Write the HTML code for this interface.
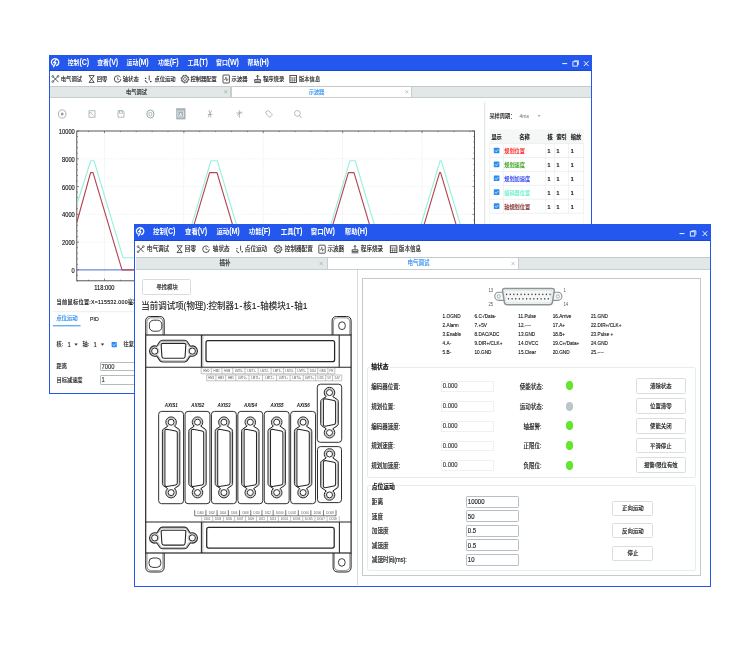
<!DOCTYPE html><html lang="zh"><head><meta charset="utf-8"><title>运动控制器调试软件</title><style>html,body{margin:0;padding:0}body{width:750px;height:650px;background:#fff;position:relative;overflow:hidden;font-family:'Liberation Sans','Noto Sans CJK SC',sans-serif}svg text{font-family:'Liberation Sans','Noto Sans CJK SC',sans-serif}div{-webkit-text-stroke:0.13px currentColor}</style></head><body><div id="root" style="position:absolute;left:0;top:0;width:750px;height:650px;will-change:transform">
<div style="position:absolute;left:49.10px;top:55.00px;width:542.80px;height:338.60px;background:#fff;border:1.3px solid #2357ee;box-sizing:border-box"></div>
<div style="position:absolute;left:49.10px;top:55.00px;width:542.80px;height:16.20px;background:#2357ee;border-bottom:0.8px solid #1449d6;box-sizing:border-box"></div>
<div style="position:absolute;left:67.70px;top:59.46px;line-height:7.67px;font-size:5.9px;color:#fff;font-weight:bold;white-space:nowrap;transform:scaleY(1.15);-webkit-text-stroke:0;">控制<span style="font-size:7.2px;letter-spacing:-0.2px">(C)</span></div>
<div style="position:absolute;left:97.20px;top:59.46px;line-height:7.67px;font-size:5.9px;color:#fff;font-weight:bold;white-space:nowrap;transform:scaleY(1.15);-webkit-text-stroke:0;">查看<span style="font-size:7.2px;letter-spacing:-0.2px">(V)</span></div>
<div style="position:absolute;left:126.60px;top:59.46px;line-height:7.67px;font-size:5.9px;color:#fff;font-weight:bold;white-space:nowrap;transform:scaleY(1.15);-webkit-text-stroke:0;">运动<span style="font-size:7.2px;letter-spacing:-0.2px">(M)</span></div>
<div style="position:absolute;left:158.00px;top:59.46px;line-height:7.67px;font-size:5.9px;color:#fff;font-weight:bold;white-space:nowrap;transform:scaleY(1.15);-webkit-text-stroke:0;">功能<span style="font-size:7.2px;letter-spacing:-0.2px">(F)</span></div>
<div style="position:absolute;left:187.40px;top:59.46px;line-height:7.67px;font-size:5.9px;color:#fff;font-weight:bold;white-space:nowrap;transform:scaleY(1.15);-webkit-text-stroke:0;">工具<span style="font-size:7.2px;letter-spacing:-0.2px">(T)</span></div>
<div style="position:absolute;left:216.00px;top:59.46px;line-height:7.67px;font-size:5.9px;color:#fff;font-weight:bold;white-space:nowrap;transform:scaleY(1.15);-webkit-text-stroke:0;">窗口<span style="font-size:7.2px;letter-spacing:-0.2px">(W)</span></div>
<div style="position:absolute;left:247.60px;top:59.46px;line-height:7.67px;font-size:5.9px;color:#fff;font-weight:bold;white-space:nowrap;transform:scaleY(1.15);-webkit-text-stroke:0;">帮助<span style="font-size:7.2px;letter-spacing:-0.2px">(H)</span></div>
<div style="position:absolute;left:50.40px;top:85.80px;width:540.20px;height:11.80px;background:#e2e8e8;border-top:1px solid #c2caca;border-bottom:1px solid #c6cece;box-sizing:border-box"></div>
<div style="position:absolute;left:230.50px;top:85.80px;width:181.00px;height:11.50px;background:#fff;border-top:1px solid #c2caca;border-left:0.7px solid #c6cece;border-right:0.7px solid #c6cece;box-sizing:border-box"></div>
<div style="position:absolute;left:230.00px;top:86.30px;width:0.70px;height:11.00px;background:#c6cece"></div>
<div style="position:absolute;left:36.50px;top:89.32px;width:200.00px;text-align:center;line-height:6.76px;font-size:5.2px;color:#222;font-weight:normal;white-space:nowrap;transform:scaleY(1.15);">电气调试</div>
<div style="position:absolute;left:216.50px;top:89.32px;width:200.00px;text-align:center;line-height:6.76px;font-size:5.2px;color:#3696f2;font-weight:normal;white-space:nowrap;transform:scaleY(1.15);">示波器</div>
<div style="position:absolute;left:60.80px;top:75.56px;line-height:6.89px;font-size:5.3px;color:#222;font-weight:normal;white-space:nowrap;transform:scaleY(1.15);">电气调试</div>
<div style="position:absolute;left:96.80px;top:75.56px;line-height:6.89px;font-size:5.3px;color:#222;font-weight:normal;white-space:nowrap;transform:scaleY(1.15);">回零</div>
<div style="position:absolute;left:122.80px;top:75.56px;line-height:6.89px;font-size:5.3px;color:#222;font-weight:normal;white-space:nowrap;transform:scaleY(1.15);">轴状态</div>
<div style="position:absolute;left:154.40px;top:75.56px;line-height:6.89px;font-size:5.3px;color:#222;font-weight:normal;white-space:nowrap;transform:scaleY(1.15);">点位运动</div>
<div style="position:absolute;left:190.40px;top:75.56px;line-height:6.89px;font-size:5.3px;color:#222;font-weight:normal;white-space:nowrap;transform:scaleY(1.15);">控制器配置</div>
<div style="position:absolute;left:231.60px;top:75.56px;line-height:6.89px;font-size:5.3px;color:#222;font-weight:normal;white-space:nowrap;transform:scaleY(1.15);">示波器</div>
<div style="position:absolute;left:263.00px;top:75.56px;line-height:6.89px;font-size:5.3px;color:#222;font-weight:normal;white-space:nowrap;transform:scaleY(1.15);">程序烧录</div>
<div style="position:absolute;left:299.00px;top:75.56px;line-height:6.89px;font-size:5.3px;color:#222;font-weight:normal;white-space:nowrap;transform:scaleY(1.15);">版本信息</div>
<svg style="position:absolute;left:0px;top:0px;overflow:visible" width="750" height="650" viewBox="0 0 750 650">
<ellipse cx="55.1" cy="62.2" rx="3.5" ry="3.7" fill="none" stroke="#fff" stroke-width="1.35" stroke-dasharray="19.5 3.2" transform="rotate(118 55.1 62.2)"/><path d="M56.5 59.400000000000006L53.6 62.7H55.9L53.300000000000004 67.2" stroke="#fff" stroke-width="1.25" fill="none" stroke-linejoin="round"/>
<path d="M562.2 63.6H567.2" stroke="#fff" stroke-width="0.95"/><rect x="572.9" y="61.7" width="4.5" height="4.4" fill="none" stroke="#fff" stroke-width="0.85"/><path d="M574.1 60.7H578.5V64.9" stroke="#fff" stroke-width="0.7" fill="none"/><path d="M583.9000000000001 61.2L588.5 66.0M588.5 61.2L583.9000000000001 66.0" stroke="#fff" stroke-width="0.95"/>
<path d="M53.199999999999996 76.8L58.4 82.0M57.8 76.6L53.199999999999996 81.2" stroke="#2a2a2a" stroke-width="0.8" fill="none"/><circle cx="52.8" cy="76.4" r="0.9" fill="none" stroke="#2a2a2a" stroke-width="0.6"/><circle cx="52.8" cy="81.6" r="0.9" fill="none" stroke="#2a2a2a" stroke-width="0.6"/><circle cx="58.1" cy="76.3" r="0.9" fill="none" stroke="#2a2a2a" stroke-width="0.6"/><path d="M89.0 75.6H94.19999999999999L91.6 79.0L94.19999999999999 82.4H89.0L91.6 79.0Z" stroke="#2a2a2a" stroke-width="0.8" fill="none"/><circle cx="117.6" cy="79.0" r="3.3" fill="none" stroke="#2a2a2a" stroke-width="0.8" stroke-dasharray="18.5 2.2"/><path d="M117.6 77.2V79.3H119.19999999999999" stroke="#2a2a2a" stroke-width="0.6" fill="none"/><path d="M145.2 80.0q0 2.5 2.5 2.5M149.2 75.5v5" stroke="#2a2a2a" stroke-width="0.8" fill="none"/><circle cx="150.79999999999998" cy="81.6" r="0.8" fill="#2a2a2a"/><circle cx="145.6" cy="78.4" r="0.7" fill="#2a2a2a"/><circle cx="185.0" cy="79.0" r="3.3" fill="none" stroke="#2a2a2a" stroke-width="0.8"/><circle cx="185.0" cy="79.0" r="3.9" fill="none" stroke="#2a2a2a" stroke-width="0.9" stroke-dasharray="1.4 1.66"/><circle cx="185.0" cy="79.0" r="1.5" fill="none" stroke="#2a2a2a" stroke-width="0.6"/><rect x="223.0" y="75.0" width="6.4" height="8.0" rx="0.6" fill="none" stroke="#2a2a2a" stroke-width="0.8"/><path d="M224.0 79.6H225.2L226.0 77.0L226.79999999999998 81.0L227.39999999999998 79.2H228.39999999999998" stroke="#2a2a2a" stroke-width="0.55" fill="none"/><path d="M254.20000000000002 82.6H261.0M254.60000000000002 81.2V79.6H260.6V81.2ZM257.6 75.4V79.4M256.40000000000003 76.6L257.6 75.2L258.8 76.6" stroke="#2a2a2a" stroke-width="0.8" fill="none"/><rect x="289.9" y="75.6" width="6.6" height="6.8" fill="none" stroke="#2a2a2a" stroke-width="0.8"/><path d="M289.9 77.8H296.5M289.9 80.1H296.5M292.2 77.8V82.4M294.4 77.8V82.4" stroke="#2a2a2a" stroke-width="0.5" fill="none"/>
<path d="M224.20000000000002 90.2L227.4 93.39999999999999M227.4 90.2L224.20000000000002 93.39999999999999" stroke="#8a9296" stroke-width="0.5"/>
<path d="M405.2 90.2L408.40000000000003 93.39999999999999M408.40000000000003 90.2L405.2 93.39999999999999" stroke="#8a9296" stroke-width="0.5"/>
<ellipse cx="62.2" cy="114.0" rx="3.7" ry="4.1" fill="none" stroke="#939fa5" stroke-width="0.8"/><ellipse cx="62.2" cy="114.0" rx="1.4" ry="1.6" fill="#939fa5"/>
<rect x="89.0" y="110.8" width="6" height="6.4" fill="none" stroke="#939fa5" stroke-width="0.7"/><path d="M90.5 112.5L93.5 115.5M89.0 112.8H91.5" stroke="#939fa5" stroke-width="0.6"/>
<path d="M118.0 110.8H123.0L124.0 111.8V117.2H118.0Z" fill="none" stroke="#939fa5" stroke-width="0.7"/><rect x="119.4" y="110.8" width="3.2" height="2.4" fill="none" stroke="#939fa5" stroke-width="0.6"/>
<ellipse cx="150.4" cy="114.0" rx="3.6" ry="4.0" fill="none" stroke="#939fa5" stroke-width="0.9"/><ellipse cx="150.4" cy="114.0" rx="1.6" ry="1.8" fill="none" stroke="#939fa5" stroke-width="0.7"/>
<rect x="176.2" y="108.2" width="9.3" height="11.2" fill="#a7b2b7"/><rect x="177.9" y="111.0" width="5.4" height="6.0" fill="none" stroke="#fff" stroke-width="0.6"/><text x="180.6" y="115.5" font-size="4.2" text-anchor="middle" fill="#fff">A</text>
<path d="M209.0 110.0L211.0 117.5M211.6 110.6L208.0 117.5M207.8 114.5H212.4" stroke="#939fa5" stroke-width="0.7" fill="none"/>
<path d="M239.4 110.2V117.8M236.20000000000002 113.0H242.6M237.20000000000002 115.8L241.4 111.4" stroke="#939fa5" stroke-width="0.7" fill="none"/>
<path d="M265.8 111.8L268.6 110.6L272.4 114.8L270.0 117.4L266.0 113.8Z" fill="none" stroke="#939fa5" stroke-width="0.7"/>
<circle cx="297.4" cy="113.4" r="2.9" fill="none" stroke="#939fa5" stroke-width="0.7"/><path d="M299.5 115.6L301.4 117.8" stroke="#939fa5" stroke-width="0.8"/>
<path d="M104.5 131.0V280.8" stroke="#d9dddd" stroke-width="0.5" stroke-dasharray="1 0.8"/>
<path d="M183.7 131.0V280.8" stroke="#d9dddd" stroke-width="0.5" stroke-dasharray="1 0.8"/>
<path d="M263.2 131.0V280.8" stroke="#d9dddd" stroke-width="0.5" stroke-dasharray="1 0.8"/>
<path d="M342.6 131.0V280.8" stroke="#d9dddd" stroke-width="0.5" stroke-dasharray="1 0.8"/>
<path d="M422.2 131.0V280.8" stroke="#d9dddd" stroke-width="0.5" stroke-dasharray="1 0.8"/>
<path d="M76.8 269.90H474.5" stroke="#e3e6e6" stroke-width="0.5" stroke-dasharray="1 0.8"/>
<path d="M76.8 242.12H474.5" stroke="#e3e6e6" stroke-width="0.5" stroke-dasharray="1 0.8"/>
<path d="M76.8 214.34H474.5" stroke="#e3e6e6" stroke-width="0.5" stroke-dasharray="1 0.8"/>
<path d="M76.8 186.56H474.5" stroke="#e3e6e6" stroke-width="0.5" stroke-dasharray="1 0.8"/>
<path d="M76.8 158.78H474.5" stroke="#e3e6e6" stroke-width="0.5" stroke-dasharray="1 0.8"/>
<rect x="76.8" y="131.0" width="397.7" height="149.8" fill="none" stroke="#444" stroke-width="0.9"/>
<path d="M76.8 281.01h1.1M474.5 281.01h-1.1M76.8 275.46h1.1M474.5 275.46h-1.1M76.8 269.90h2.2M474.5 269.90h-2.2M76.8 264.34h1.1M474.5 264.34h-1.1M76.8 258.79h1.1M474.5 258.79h-1.1M76.8 253.23h1.1M474.5 253.23h-1.1M76.8 247.68h1.1M474.5 247.68h-1.1M76.8 242.12h2.2M474.5 242.12h-2.2M76.8 236.56h1.1M474.5 236.56h-1.1M76.8 231.01h1.1M474.5 231.01h-1.1M76.8 225.45h1.1M474.5 225.45h-1.1M76.8 219.90h1.1M474.5 219.90h-1.1M76.8 214.34h2.2M474.5 214.34h-2.2M76.8 208.78h1.1M474.5 208.78h-1.1M76.8 203.23h1.1M474.5 203.23h-1.1M76.8 197.67h1.1M474.5 197.67h-1.1M76.8 192.12h1.1M474.5 192.12h-1.1M76.8 186.56h2.2M474.5 186.56h-2.2M76.8 181.00h1.1M474.5 181.00h-1.1M76.8 175.45h1.1M474.5 175.45h-1.1M76.8 169.89h1.1M474.5 169.89h-1.1M76.8 164.34h1.1M474.5 164.34h-1.1M76.8 158.78h2.2M474.5 158.78h-2.2M76.8 153.22h1.1M474.5 153.22h-1.1M76.8 147.67h1.1M474.5 147.67h-1.1M76.8 142.11h1.1M474.5 142.11h-1.1M76.8 136.56h1.1M474.5 136.56h-1.1M76.8 131.00h2.2M474.5 131.00h-2.2M88.62 131.0v1.1M88.62 280.8v-1.1M104.50 131.0v2.2M104.50 280.8v-2.2M120.38 131.0v1.1M120.38 280.8v-1.1M136.26 131.0v1.1M136.26 280.8v-1.1M152.14 131.0v1.1M152.14 280.8v-1.1M168.02 131.0v1.1M168.02 280.8v-1.1M183.90 131.0v2.2M183.90 280.8v-2.2M199.78 131.0v1.1M199.78 280.8v-1.1M215.66 131.0v1.1M215.66 280.8v-1.1M231.54 131.0v1.1M231.54 280.8v-1.1M247.42 131.0v1.1M247.42 280.8v-1.1M263.30 131.0v2.2M263.30 280.8v-2.2M279.18 131.0v1.1M279.18 280.8v-1.1M295.06 131.0v1.1M295.06 280.8v-1.1M310.94 131.0v1.1M310.94 280.8v-1.1M326.82 131.0v1.1M326.82 280.8v-1.1M342.70 131.0v2.2M342.70 280.8v-2.2M358.58 131.0v1.1M358.58 280.8v-1.1M374.46 131.0v1.1M374.46 280.8v-1.1M390.34 131.0v1.1M390.34 280.8v-1.1M406.22 131.0v1.1M406.22 280.8v-1.1M422.10 131.0v2.2M422.10 280.8v-2.2M437.98 131.0v1.1M437.98 280.8v-1.1M453.86 131.0v1.1M453.86 280.8v-1.1M469.74 131.0v1.1M469.74 280.8v-1.1" stroke="#444" stroke-width="0.6" fill="none"/>
<clipPath id="cp"><rect x="76.8" y="131.0" width="397.7" height="149.8"/></clipPath><g clip-path="url(#cp)">
<path d="M76.8 204.5L90.8 160.7L94.0 160.7L123.0 257.7L182.0 257.7L211.0 160.7L217.3 160.7L246.3 257.7L321.0 257.7L350.0 160.7L355.2 160.7L384.2 257.7L411.2 257.7L440.2 160.7L441.2 160.7L470.2 257.7L474.5 257.7" stroke="#98f0dc" stroke-width="1.15" fill="none" stroke-linejoin="round"/>
<path d="M76.8 269.9H474.5" stroke="#3c5fd0" stroke-width="0.9"/>
<path d="M76.8 222.5L90.6 172.6L93.0 172.6L122.0 269.9L180.6 269.9L209.6 172.6L217.0 172.6L246.0 269.9L319.4 269.9L348.4 172.6L354.0 172.6L383.0 269.9L410.6 269.9L439.6 172.6L440.6 172.6L469.6 269.9L474.5 269.9" stroke="#b64552" stroke-width="1.15" fill="none" stroke-linejoin="round"/>
</g>
<text transform="translate(74.80 270.60) scale(1 1.15)" x="0" y="2.07" font-size="5.75" text-anchor="end" fill="#111" stroke="#111" stroke-width="0.12">0</text>
<text transform="translate(74.80 242.82) scale(1 1.15)" x="0" y="2.07" font-size="5.75" text-anchor="end" fill="#111" stroke="#111" stroke-width="0.12">2000</text>
<text transform="translate(74.80 215.04) scale(1 1.15)" x="0" y="2.07" font-size="5.75" text-anchor="end" fill="#111" stroke="#111" stroke-width="0.12">4000</text>
<text transform="translate(74.80 187.26) scale(1 1.15)" x="0" y="2.07" font-size="5.75" text-anchor="end" fill="#111" stroke="#111" stroke-width="0.12">6000</text>
<text transform="translate(74.80 159.48) scale(1 1.15)" x="0" y="2.07" font-size="5.75" text-anchor="end" fill="#111" stroke="#111" stroke-width="0.12">8000</text>
<text transform="translate(74.80 131.70) scale(1 1.15)" x="0" y="2.07" font-size="5.75" text-anchor="end" fill="#111" stroke="#111" stroke-width="0.12">10000</text>
<text transform="translate(104.40 287.50) scale(1 1.15)" x="0" y="2.07" font-size="5.75" text-anchor="middle" fill="#111" stroke="#111" stroke-width="0.12">118:000</text>
<path d="M484.6 102.6V393" stroke="#e4e8e8" stroke-width="1.4"/>
<path d="M537.8 115.2h2.6l-1.3 1.7z" fill="#889"/>
<rect x="489.4" y="129.4" width="94.20000000000005" height="14.199999999999989" fill="#f5f7f7"/>
<path d="M489.4 143.6H583.6M489.4 157.5H583.6M489.4 171.4H583.6M489.4 185.3H583.6M489.4 199.2H583.6M489.4 213.2H583.6M489.4 143.6V213.2M503.4 143.6V213.2M545.6 143.6V213.2M554.6 143.6V213.2M568.4 143.6V213.2M583.6 143.6V213.2" stroke="#e3e8e8" stroke-width="0.6" fill="none"/>
<path d="M489.4 213.2V240M583.6 213.2V240" stroke="#eef1f1" stroke-width="0.6"/>
<rect x="493.8" y="147.65" width="5.6" height="5.6" rx="0.6" fill="#2d8cf0"/><path d="M495 150.45l1.2 1.3l2-2.4" stroke="#fff" stroke-width="0.7" fill="none"/>
<rect x="493.8" y="161.55" width="5.6" height="5.6" rx="0.6" fill="#2d8cf0"/><path d="M495 164.35l1.2 1.3l2-2.4" stroke="#fff" stroke-width="0.7" fill="none"/>
<rect x="493.8" y="175.45" width="5.6" height="5.6" rx="0.6" fill="#2d8cf0"/><path d="M495 178.25l1.2 1.3l2-2.4" stroke="#fff" stroke-width="0.7" fill="none"/>
<rect x="493.8" y="189.35" width="5.6" height="5.6" rx="0.6" fill="#2d8cf0"/><path d="M495 192.15l1.2 1.3l2-2.4" stroke="#fff" stroke-width="0.7" fill="none"/>
<rect x="493.8" y="203.30" width="5.6" height="5.6" rx="0.6" fill="#2d8cf0"/><path d="M495 206.10l1.2 1.3l2-2.4" stroke="#fff" stroke-width="0.7" fill="none"/>
<path d="M53 311.7H480" stroke="#e4e8e8" stroke-width="0.8"/>
<path d="M53 325.8H80.6" stroke="#2d8cf0" stroke-width="1"/>
<path d="M74.4 343.6h3.4l-1.7 2.1zM100.8 343.6h3.4l-1.7 2.1z" fill="#333"/>
<rect x="111.6" y="342" width="5.2" height="5.2" rx="0.6" fill="#2d8cf0"/><path d="M112.7 344.6l1.1 1.2l1.9-2.3" stroke="#fff" stroke-width="0.7" fill="none"/>
</svg>
<div style="position:absolute;left:489.40px;top:113.02px;line-height:6.76px;font-size:5.2px;color:#222;font-weight:normal;white-space:nowrap;transform:scaleY(1.15);">采样周期：</div>
<div style="position:absolute;left:519.60px;top:113.15px;line-height:6.50px;font-size:5.0px;color:#8a9499;font-weight:normal;white-space:nowrap;transform:scaleY(1.15);">4ms</div>
<div style="position:absolute;left:481.60px;top:134.02px;width:30.00px;text-align:center;line-height:6.76px;font-size:5.2px;color:#222;font-weight:bold;white-space:nowrap;transform:scaleY(1.15);">显示</div>
<div style="position:absolute;left:509.40px;top:134.02px;width:30.00px;text-align:center;line-height:6.76px;font-size:5.2px;color:#222;font-weight:bold;white-space:nowrap;transform:scaleY(1.15);">名称</div>
<div style="position:absolute;left:535.00px;top:134.02px;width:30.00px;text-align:center;line-height:6.76px;font-size:5.2px;color:#222;font-weight:bold;white-space:nowrap;transform:scaleY(1.15);">核</div>
<div style="position:absolute;left:546.60px;top:134.02px;width:30.00px;text-align:center;line-height:6.76px;font-size:5.2px;color:#222;font-weight:bold;white-space:nowrap;transform:scaleY(1.15);">索引</div>
<div style="position:absolute;left:561.00px;top:134.02px;width:30.00px;text-align:center;line-height:6.76px;font-size:5.2px;color:#222;font-weight:bold;white-space:nowrap;transform:scaleY(1.15);">缩放</div>
<div style="position:absolute;left:504.20px;top:148.07px;line-height:6.76px;font-size:5.2px;color:#f22;font-weight:normal;white-space:nowrap;transform:scaleY(1.15);">规划位置</div>
<div style="position:absolute;left:547.40px;top:148.07px;line-height:6.76px;font-size:5.2px;color:#222;font-weight:bold;white-space:nowrap;transform:scaleY(1.15);">1</div>
<div style="position:absolute;left:556.40px;top:148.07px;line-height:6.76px;font-size:5.2px;color:#222;font-weight:bold;white-space:nowrap;transform:scaleY(1.15);">1</div>
<div style="position:absolute;left:570.80px;top:148.07px;line-height:6.76px;font-size:5.2px;color:#222;font-weight:bold;white-space:nowrap;transform:scaleY(1.15);">1</div>
<div style="position:absolute;left:504.20px;top:161.97px;line-height:6.76px;font-size:5.2px;color:#3aa020;font-weight:normal;white-space:nowrap;transform:scaleY(1.15);">规划速度</div>
<div style="position:absolute;left:547.40px;top:161.97px;line-height:6.76px;font-size:5.2px;color:#222;font-weight:bold;white-space:nowrap;transform:scaleY(1.15);">1</div>
<div style="position:absolute;left:556.40px;top:161.97px;line-height:6.76px;font-size:5.2px;color:#222;font-weight:bold;white-space:nowrap;transform:scaleY(1.15);">1</div>
<div style="position:absolute;left:570.80px;top:161.97px;line-height:6.76px;font-size:5.2px;color:#222;font-weight:bold;white-space:nowrap;transform:scaleY(1.15);">1</div>
<div style="position:absolute;left:504.20px;top:175.87px;line-height:6.76px;font-size:5.2px;color:#2a3cf0;font-weight:normal;white-space:nowrap;transform:scaleY(1.15);">规划加速度</div>
<div style="position:absolute;left:547.40px;top:175.87px;line-height:6.76px;font-size:5.2px;color:#222;font-weight:bold;white-space:nowrap;transform:scaleY(1.15);">1</div>
<div style="position:absolute;left:556.40px;top:175.87px;line-height:6.76px;font-size:5.2px;color:#222;font-weight:bold;white-space:nowrap;transform:scaleY(1.15);">1</div>
<div style="position:absolute;left:570.80px;top:175.87px;line-height:6.76px;font-size:5.2px;color:#222;font-weight:bold;white-space:nowrap;transform:scaleY(1.15);">1</div>
<div style="position:absolute;left:504.20px;top:189.77px;line-height:6.76px;font-size:5.2px;color:#6ef0c8;font-weight:normal;white-space:nowrap;transform:scaleY(1.15);">编码器位置</div>
<div style="position:absolute;left:547.40px;top:189.77px;line-height:6.76px;font-size:5.2px;color:#222;font-weight:bold;white-space:nowrap;transform:scaleY(1.15);">1</div>
<div style="position:absolute;left:556.40px;top:189.77px;line-height:6.76px;font-size:5.2px;color:#222;font-weight:bold;white-space:nowrap;transform:scaleY(1.15);">1</div>
<div style="position:absolute;left:570.80px;top:189.77px;line-height:6.76px;font-size:5.2px;color:#222;font-weight:bold;white-space:nowrap;transform:scaleY(1.15);">1</div>
<div style="position:absolute;left:504.20px;top:203.72px;line-height:6.76px;font-size:5.2px;color:#7a2a2a;font-weight:normal;white-space:nowrap;transform:scaleY(1.15);">轴规划位置</div>
<div style="position:absolute;left:547.40px;top:203.72px;line-height:6.76px;font-size:5.2px;color:#222;font-weight:bold;white-space:nowrap;transform:scaleY(1.15);">1</div>
<div style="position:absolute;left:556.40px;top:203.72px;line-height:6.76px;font-size:5.2px;color:#222;font-weight:bold;white-space:nowrap;transform:scaleY(1.15);">1</div>
<div style="position:absolute;left:570.80px;top:203.72px;line-height:6.76px;font-size:5.2px;color:#222;font-weight:bold;white-space:nowrap;transform:scaleY(1.15);">1</div>
<div style="position:absolute;left:56.60px;top:298.92px;line-height:6.76px;font-size:5.2px;color:#111;font-weight:normal;white-space:nowrap;transform:scaleY(1.15);letter-spacing:0.27px;">当前鼠标位置:X=115532.000毫秒,Y=9120.000</div>
<div style="position:absolute;left:56.20px;top:315.49px;line-height:7.02px;font-size:5.4px;color:#2d8cf0;font-weight:normal;white-space:nowrap;transform:scaleY(1.15);">点位运动</div>
<div style="position:absolute;left:90.00px;top:315.62px;line-height:6.76px;font-size:5.2px;color:#222;font-weight:normal;white-space:nowrap;transform:scaleY(1.15);">PID</div>
<div style="position:absolute;left:56.60px;top:341.22px;line-height:6.76px;font-size:5.2px;color:#222;font-weight:normal;white-space:nowrap;transform:scaleY(1.15);">核:</div>
<div style="position:absolute;left:67.60px;top:341.56px;line-height:7.67px;font-size:5.9px;color:#222;font-weight:normal;white-space:nowrap;transform:scaleY(1.15);">1</div>
<div style="position:absolute;left:82.60px;top:341.22px;line-height:6.76px;font-size:5.2px;color:#222;font-weight:normal;white-space:nowrap;transform:scaleY(1.15);">轴:</div>
<div style="position:absolute;left:93.40px;top:341.56px;line-height:7.67px;font-size:5.9px;color:#222;font-weight:normal;white-space:nowrap;transform:scaleY(1.15);">1</div>
<div style="position:absolute;left:123.60px;top:341.22px;line-height:6.76px;font-size:5.2px;color:#222;font-weight:normal;white-space:nowrap;transform:scaleY(1.15);">往复运动</div>
<div style="position:absolute;left:56.60px;top:362.82px;line-height:6.76px;font-size:5.2px;color:#222;font-weight:normal;white-space:nowrap;transform:scaleY(1.15);">距离</div>
<div style="position:absolute;left:56.60px;top:376.82px;line-height:6.76px;font-size:5.2px;color:#222;font-weight:normal;white-space:nowrap;transform:scaleY(1.15);">目标减速度</div>
<div style="position:absolute;left:100.00px;top:361.80px;width:160.00px;height:9.60px;border:0.7px solid #b4bcbc;border-radius:1px;box-sizing:border-box;background:#fff"></div>
<div style="position:absolute;left:100.00px;top:375.20px;width:160.00px;height:9.60px;border:0.7px solid #b4bcbc;border-radius:1px;box-sizing:border-box;background:#fff"></div>
<div style="position:absolute;left:101.60px;top:363.63px;line-height:7.54px;font-size:5.8px;color:#333;font-weight:normal;white-space:nowrap;transform:scaleY(1.15);">7000</div>
<div style="position:absolute;left:101.60px;top:377.43px;line-height:7.54px;font-size:5.8px;color:#333;font-weight:normal;white-space:nowrap;transform:scaleY(1.15);">1</div>
<div style="position:absolute;left:134.20px;top:223.70px;width:576.70px;height:363.30px;background:#fff;border:1.3px solid #2357ee;box-sizing:border-box"></div>
<div style="position:absolute;left:134.20px;top:223.70px;width:576.70px;height:17.10px;background:#2357ee;border-bottom:0.8px solid #1449d6;box-sizing:border-box"></div>
<div style="position:absolute;left:153.00px;top:228.04px;line-height:8.32px;font-size:6.4px;color:#fff;font-weight:bold;white-space:nowrap;transform:scaleY(1.15);-webkit-text-stroke:0;">控制<span style="font-size:7.3px;letter-spacing:-0.2px">(C)</span></div>
<div style="position:absolute;left:185.00px;top:228.04px;line-height:8.32px;font-size:6.4px;color:#fff;font-weight:bold;white-space:nowrap;transform:scaleY(1.15);-webkit-text-stroke:0;">查看<span style="font-size:7.3px;letter-spacing:-0.2px">(V)</span></div>
<div style="position:absolute;left:216.40px;top:228.04px;line-height:8.32px;font-size:6.4px;color:#fff;font-weight:bold;white-space:nowrap;transform:scaleY(1.15);-webkit-text-stroke:0;">运动<span style="font-size:7.3px;letter-spacing:-0.2px">(M)</span></div>
<div style="position:absolute;left:248.80px;top:228.04px;line-height:8.32px;font-size:6.4px;color:#fff;font-weight:bold;white-space:nowrap;transform:scaleY(1.15);-webkit-text-stroke:0;">功能<span style="font-size:7.3px;letter-spacing:-0.2px">(F)</span></div>
<div style="position:absolute;left:280.80px;top:228.04px;line-height:8.32px;font-size:6.4px;color:#fff;font-weight:bold;white-space:nowrap;transform:scaleY(1.15);-webkit-text-stroke:0;">工具<span style="font-size:7.3px;letter-spacing:-0.2px">(T)</span></div>
<div style="position:absolute;left:310.80px;top:228.04px;line-height:8.32px;font-size:6.4px;color:#fff;font-weight:bold;white-space:nowrap;transform:scaleY(1.15);-webkit-text-stroke:0;">窗口<span style="font-size:7.3px;letter-spacing:-0.2px">(W)</span></div>
<div style="position:absolute;left:344.80px;top:228.04px;line-height:8.32px;font-size:6.4px;color:#fff;font-weight:bold;white-space:nowrap;transform:scaleY(1.15);-webkit-text-stroke:0;">帮助<span style="font-size:7.3px;letter-spacing:-0.2px">(H)</span></div>
<div style="position:absolute;left:135.50px;top:257.40px;width:574.10px;height:12.30px;background:#e2e8e8;border-top:1px solid #c2caca;border-bottom:1px solid #c6cece;box-sizing:border-box"></div>
<div style="position:absolute;left:327.00px;top:257.40px;width:192.40px;height:12.00px;background:#fff;border-top:1px solid #c2caca;border-left:0.7px solid #c6cece;border-right:0.7px solid #c6cece;box-sizing:border-box"></div>
<div style="position:absolute;left:125.00px;top:260.03px;width:200.00px;text-align:center;line-height:7.15px;font-size:5.5px;color:#222;font-weight:normal;white-space:nowrap;transform:scaleY(1.15);">插补</div>
<div style="position:absolute;left:318.50px;top:260.03px;width:200.00px;text-align:center;line-height:7.15px;font-size:5.5px;color:#2d8cf0;font-weight:normal;white-space:nowrap;transform:scaleY(1.15);">电气调试</div>
<div style="position:absolute;left:146.80px;top:245.56px;line-height:7.28px;font-size:5.6px;color:#222;font-weight:normal;white-space:nowrap;transform:scaleY(1.15);">电气调试</div>
<div style="position:absolute;left:184.80px;top:245.56px;line-height:7.28px;font-size:5.6px;color:#222;font-weight:normal;white-space:nowrap;transform:scaleY(1.15);">回零</div>
<div style="position:absolute;left:212.80px;top:245.56px;line-height:7.28px;font-size:5.6px;color:#222;font-weight:normal;white-space:nowrap;transform:scaleY(1.15);">轴状态</div>
<div style="position:absolute;left:244.80px;top:245.56px;line-height:7.28px;font-size:5.6px;color:#222;font-weight:normal;white-space:nowrap;transform:scaleY(1.15);">点位运动</div>
<div style="position:absolute;left:284.80px;top:245.56px;line-height:7.28px;font-size:5.6px;color:#222;font-weight:normal;white-space:nowrap;transform:scaleY(1.15);">控制器配置</div>
<div style="position:absolute;left:327.40px;top:245.56px;line-height:7.28px;font-size:5.6px;color:#222;font-weight:normal;white-space:nowrap;transform:scaleY(1.15);">示波器</div>
<div style="position:absolute;left:360.80px;top:245.56px;line-height:7.28px;font-size:5.6px;color:#222;font-weight:normal;white-space:nowrap;transform:scaleY(1.15);">程序烧录</div>
<div style="position:absolute;left:398.80px;top:245.56px;line-height:7.28px;font-size:5.6px;color:#222;font-weight:normal;white-space:nowrap;transform:scaleY(1.15);">版本信息</div>
<div style="position:absolute;left:135.50px;top:269.80px;width:222.40px;height:315.60px;border-right:0.8px solid #d5dada;box-sizing:border-box"></div>
<div style="position:absolute;left:362.40px;top:278.40px;width:338.60px;height:298.00px;border:0.8px solid #c3c9cd;box-sizing:border-box;background:#fff"></div>
<div style="position:absolute;left:142.20px;top:279.20px;width:49.30px;height:15.60px;border:0.8px solid #d6dddd;border-radius:1.5px;box-sizing:border-box;background:#fff"></div>
<div style="position:absolute;left:67.00px;top:283.69px;width:200.00px;text-align:center;line-height:7.02px;font-size:5.4px;color:#222;font-weight:normal;white-space:nowrap;transform:scaleY(1.15);">寻找模块</div>
<div style="position:absolute;left:141.30px;top:301.11px;line-height:10.98px;font-size:8.45px;color:#1a1a1a;font-weight:normal;white-space:nowrap;transform:scaleY(1.15);-webkit-text-stroke:0.12px currentColor;transform:scaleY(1.06);letter-spacing:0.02px">当前调试项(物理):控制器<span style="letter-spacing:0.95px">1-</span>核<span style="letter-spacing:0.5px">1-</span>轴模块<span style="letter-spacing:0.5px">1-</span>轴1</div>
<div style="position:absolute;left:367.40px;top:366.50px;width:328.40px;height:111.80px;border:0.8px solid #e5eded;border-radius:2px;box-sizing:border-box"></div>
<div style="position:absolute;left:367.40px;top:485.40px;width:329.00px;height:86.00px;border:0.8px solid #e5eded;border-radius:2px;box-sizing:border-box"></div>
<div style="position:absolute;left:370.30px;top:365.50px;width:19.50px;height:3.00px;background:#fff"></div>
<div style="position:absolute;left:371.30px;top:364.19px;line-height:7.41px;font-size:5.7px;color:#111;font-weight:bold;white-space:nowrap;transform:scaleY(1.15);">轴状态</div>
<div style="position:absolute;left:370.60px;top:484.60px;width:25.60px;height:3.00px;background:#fff"></div>
<div style="position:absolute;left:371.70px;top:483.73px;line-height:7.54px;font-size:5.8px;color:#111;font-weight:bold;white-space:nowrap;transform:scaleY(1.15);">点位运动</div>
<div style="position:absolute;left:371.30px;top:383.53px;line-height:7.15px;font-size:5.5px;color:#111;font-weight:normal;white-space:nowrap;transform:scaleY(1.15);">编码器位置:</div>
<div style="position:absolute;left:441.00px;top:381.00px;width:52.70px;height:10.60px;border:0.6px solid #edf1f1;box-sizing:border-box;background:#fff"></div>
<div style="position:absolute;left:442.80px;top:383.07px;line-height:7.67px;font-size:5.9px;color:#333;font-weight:normal;white-space:nowrap;transform:scaleY(1.15);">0.000</div>
<div style="position:absolute;left:519.80px;top:383.53px;line-height:7.15px;font-size:5.5px;color:#111;font-weight:normal;white-space:nowrap;transform:scaleY(1.15);">使能状态:</div>
<div style="position:absolute;left:565.50px;top:381.30px;width:7.60px;height:9.00px;background:radial-gradient(ellipse at 42% 45%, #66ea2e 0%, #5ee428 60%, #4fd41c 100%);border-radius:50%"></div>
<div style="position:absolute;left:636.00px;top:378.20px;width:49.60px;height:15.40px;border:0.7px solid #d9dfdf;border-radius:1.5px;box-sizing:border-box;background:#fff"></div>
<div style="position:absolute;left:560.80px;top:382.89px;width:200.00px;text-align:center;line-height:7.02px;font-size:5.4px;color:#111;font-weight:normal;white-space:nowrap;transform:scaleY(1.15);">清除状态</div>
<div style="position:absolute;left:371.30px;top:403.73px;line-height:7.15px;font-size:5.5px;color:#111;font-weight:normal;white-space:nowrap;transform:scaleY(1.15);">规划位置:</div>
<div style="position:absolute;left:441.00px;top:401.20px;width:52.70px;height:10.60px;border:0.6px solid #edf1f1;box-sizing:border-box;background:#fff"></div>
<div style="position:absolute;left:442.80px;top:403.27px;line-height:7.67px;font-size:5.9px;color:#333;font-weight:normal;white-space:nowrap;transform:scaleY(1.15);">0.000</div>
<div style="position:absolute;left:519.80px;top:403.73px;line-height:7.15px;font-size:5.5px;color:#111;font-weight:normal;white-space:nowrap;transform:scaleY(1.15);">运动状态:</div>
<div style="position:absolute;left:565.50px;top:401.50px;width:7.60px;height:9.00px;background:radial-gradient(ellipse at 50% 50%, #bcc7cb 0%, #b9c4c8 70%, #aab6bb 100%);border-radius:50%"></div>
<div style="position:absolute;left:636.00px;top:398.40px;width:49.60px;height:15.40px;border:0.7px solid #d9dfdf;border-radius:1.5px;box-sizing:border-box;background:#fff"></div>
<div style="position:absolute;left:560.80px;top:403.09px;width:200.00px;text-align:center;line-height:7.02px;font-size:5.4px;color:#111;font-weight:normal;white-space:nowrap;transform:scaleY(1.15);">位置清零</div>
<div style="position:absolute;left:371.30px;top:423.62px;line-height:7.15px;font-size:5.5px;color:#111;font-weight:normal;white-space:nowrap;transform:scaleY(1.15);">编码器速度:</div>
<div style="position:absolute;left:441.00px;top:421.10px;width:52.70px;height:10.60px;border:0.6px solid #edf1f1;box-sizing:border-box;background:#fff"></div>
<div style="position:absolute;left:442.80px;top:423.17px;line-height:7.67px;font-size:5.9px;color:#333;font-weight:normal;white-space:nowrap;transform:scaleY(1.15);">0.000</div>
<div style="position:absolute;left:523.40px;top:423.62px;line-height:7.15px;font-size:5.5px;color:#111;font-weight:normal;white-space:nowrap;transform:scaleY(1.15);">轴报警:</div>
<div style="position:absolute;left:565.50px;top:421.40px;width:7.60px;height:9.00px;background:radial-gradient(ellipse at 42% 45%, #66ea2e 0%, #5ee428 60%, #4fd41c 100%);border-radius:50%"></div>
<div style="position:absolute;left:636.00px;top:418.30px;width:49.60px;height:15.40px;border:0.7px solid #d9dfdf;border-radius:1.5px;box-sizing:border-box;background:#fff"></div>
<div style="position:absolute;left:560.80px;top:422.99px;width:200.00px;text-align:center;line-height:7.02px;font-size:5.4px;color:#111;font-weight:normal;white-space:nowrap;transform:scaleY(1.15);">使能关闭</div>
<div style="position:absolute;left:371.30px;top:443.23px;line-height:7.15px;font-size:5.5px;color:#111;font-weight:normal;white-space:nowrap;transform:scaleY(1.15);">规划速度:</div>
<div style="position:absolute;left:441.00px;top:440.70px;width:52.70px;height:10.60px;border:0.6px solid #edf1f1;box-sizing:border-box;background:#fff"></div>
<div style="position:absolute;left:442.80px;top:442.77px;line-height:7.67px;font-size:5.9px;color:#333;font-weight:normal;white-space:nowrap;transform:scaleY(1.15);">0.000</div>
<div style="position:absolute;left:523.40px;top:443.23px;line-height:7.15px;font-size:5.5px;color:#111;font-weight:normal;white-space:nowrap;transform:scaleY(1.15);">正限位:</div>
<div style="position:absolute;left:565.50px;top:441.00px;width:7.60px;height:9.00px;background:radial-gradient(ellipse at 42% 45%, #66ea2e 0%, #5ee428 60%, #4fd41c 100%);border-radius:50%"></div>
<div style="position:absolute;left:636.00px;top:437.90px;width:49.60px;height:15.40px;border:0.7px solid #d9dfdf;border-radius:1.5px;box-sizing:border-box;background:#fff"></div>
<div style="position:absolute;left:560.80px;top:442.59px;width:200.00px;text-align:center;line-height:7.02px;font-size:5.4px;color:#111;font-weight:normal;white-space:nowrap;transform:scaleY(1.15);">平滑停止</div>
<div style="position:absolute;left:371.30px;top:462.73px;line-height:7.15px;font-size:5.5px;color:#111;font-weight:normal;white-space:nowrap;transform:scaleY(1.15);">规划加速度:</div>
<div style="position:absolute;left:441.00px;top:460.20px;width:52.70px;height:10.60px;border:0.6px solid #edf1f1;box-sizing:border-box;background:#fff"></div>
<div style="position:absolute;left:442.80px;top:462.27px;line-height:7.67px;font-size:5.9px;color:#333;font-weight:normal;white-space:nowrap;transform:scaleY(1.15);">0.000</div>
<div style="position:absolute;left:523.40px;top:462.73px;line-height:7.15px;font-size:5.5px;color:#111;font-weight:normal;white-space:nowrap;transform:scaleY(1.15);">负限位:</div>
<div style="position:absolute;left:565.50px;top:460.50px;width:7.60px;height:9.00px;background:radial-gradient(ellipse at 42% 45%, #66ea2e 0%, #5ee428 60%, #4fd41c 100%);border-radius:50%"></div>
<div style="position:absolute;left:636.00px;top:457.40px;width:49.60px;height:15.40px;border:0.7px solid #d9dfdf;border-radius:1.5px;box-sizing:border-box;background:#fff"></div>
<div style="position:absolute;left:560.80px;top:462.09px;width:200.00px;text-align:center;line-height:7.02px;font-size:5.4px;color:#111;font-weight:normal;white-space:nowrap;transform:scaleY(1.15);">报警/限位有效</div>
<div style="position:absolute;left:371.80px;top:499.26px;line-height:7.28px;font-size:5.6px;color:#111;font-weight:normal;white-space:nowrap;transform:scaleY(1.15);">距离</div>
<div style="position:absolute;left:465.60px;top:495.60px;width:53.30px;height:12.20px;border:0.9px solid #b6c0c4;border-radius:1.2px;box-sizing:border-box;background:#fff"></div>
<div style="position:absolute;left:467.80px;top:499.10px;line-height:7.80px;font-size:6.0px;color:#222;font-weight:normal;white-space:nowrap;transform:scaleY(1.15);">10000</div>
<div style="position:absolute;left:371.80px;top:513.86px;line-height:7.28px;font-size:5.6px;color:#111;font-weight:normal;white-space:nowrap;transform:scaleY(1.15);">速度</div>
<div style="position:absolute;left:465.60px;top:510.20px;width:53.30px;height:12.20px;border:0.9px solid #b6c0c4;border-radius:1.2px;box-sizing:border-box;background:#fff"></div>
<div style="position:absolute;left:467.80px;top:513.70px;line-height:7.80px;font-size:6.0px;color:#222;font-weight:normal;white-space:nowrap;transform:scaleY(1.15);">50</div>
<div style="position:absolute;left:371.80px;top:528.26px;line-height:7.28px;font-size:5.6px;color:#111;font-weight:normal;white-space:nowrap;transform:scaleY(1.15);">加速度</div>
<div style="position:absolute;left:465.60px;top:524.60px;width:53.30px;height:12.20px;border:0.9px solid #b6c0c4;border-radius:1.2px;box-sizing:border-box;background:#fff"></div>
<div style="position:absolute;left:467.80px;top:528.10px;line-height:7.80px;font-size:6.0px;color:#222;font-weight:normal;white-space:nowrap;transform:scaleY(1.15);">0.5</div>
<div style="position:absolute;left:371.80px;top:542.86px;line-height:7.28px;font-size:5.6px;color:#111;font-weight:normal;white-space:nowrap;transform:scaleY(1.15);">减速度</div>
<div style="position:absolute;left:465.60px;top:539.20px;width:53.30px;height:12.20px;border:0.9px solid #b6c0c4;border-radius:1.2px;box-sizing:border-box;background:#fff"></div>
<div style="position:absolute;left:467.80px;top:542.70px;line-height:7.80px;font-size:6.0px;color:#222;font-weight:normal;white-space:nowrap;transform:scaleY(1.15);">0.5</div>
<div style="position:absolute;left:371.80px;top:557.46px;line-height:7.28px;font-size:5.6px;color:#111;font-weight:normal;white-space:nowrap;transform:scaleY(1.15);">减速时间(ms):</div>
<div style="position:absolute;left:465.60px;top:553.80px;width:53.30px;height:12.20px;border:0.9px solid #b6c0c4;border-radius:1.2px;box-sizing:border-box;background:#fff"></div>
<div style="position:absolute;left:467.80px;top:557.30px;line-height:7.80px;font-size:6.0px;color:#222;font-weight:normal;white-space:nowrap;transform:scaleY(1.15);">10</div>
<div style="position:absolute;left:612.40px;top:500.60px;width:41.00px;height:15.20px;border:0.7px solid #d9dfdf;border-radius:1.5px;box-sizing:border-box;background:#fff"></div>
<div style="position:absolute;left:532.90px;top:505.09px;width:200.00px;text-align:center;line-height:7.02px;font-size:5.4px;color:#111;font-weight:normal;white-space:nowrap;transform:scaleY(1.15);">正向运动</div>
<div style="position:absolute;left:612.40px;top:523.20px;width:41.00px;height:15.20px;border:0.7px solid #d9dfdf;border-radius:1.5px;box-sizing:border-box;background:#fff"></div>
<div style="position:absolute;left:532.90px;top:527.69px;width:200.00px;text-align:center;line-height:7.02px;font-size:5.4px;color:#111;font-weight:normal;white-space:nowrap;transform:scaleY(1.15);">反向运动</div>
<div style="position:absolute;left:612.40px;top:545.60px;width:41.00px;height:15.20px;border:0.7px solid #d9dfdf;border-radius:1.5px;box-sizing:border-box;background:#fff"></div>
<div style="position:absolute;left:532.90px;top:550.09px;width:200.00px;text-align:center;line-height:7.02px;font-size:5.4px;color:#111;font-weight:normal;white-space:nowrap;transform:scaleY(1.15);">停止</div>
<div style="position:absolute;left:442.60px;top:313.84px;line-height:6.11px;font-size:4.7px;color:#111;font-weight:normal;white-space:nowrap;transform:scaleY(1.15);-webkit-text-stroke:0.1px currentColor;">1.OGND</div>
<div style="position:absolute;left:442.60px;top:323.04px;line-height:6.11px;font-size:4.7px;color:#111;font-weight:normal;white-space:nowrap;transform:scaleY(1.15);-webkit-text-stroke:0.1px currentColor;">2.Alarm</div>
<div style="position:absolute;left:442.60px;top:332.14px;line-height:6.11px;font-size:4.7px;color:#111;font-weight:normal;white-space:nowrap;transform:scaleY(1.15);-webkit-text-stroke:0.1px currentColor;">3.Enable</div>
<div style="position:absolute;left:442.60px;top:341.14px;line-height:6.11px;font-size:4.7px;color:#111;font-weight:normal;white-space:nowrap;transform:scaleY(1.15);-webkit-text-stroke:0.1px currentColor;">4.A-</div>
<div style="position:absolute;left:442.60px;top:350.25px;line-height:6.11px;font-size:4.7px;color:#111;font-weight:normal;white-space:nowrap;transform:scaleY(1.15);-webkit-text-stroke:0.1px currentColor;">5.B-</div>
<div style="position:absolute;left:474.50px;top:313.84px;line-height:6.11px;font-size:4.7px;color:#111;font-weight:normal;white-space:nowrap;transform:scaleY(1.15);-webkit-text-stroke:0.1px currentColor;">6.C-/Data-</div>
<div style="position:absolute;left:474.50px;top:323.04px;line-height:6.11px;font-size:4.7px;color:#111;font-weight:normal;white-space:nowrap;transform:scaleY(1.15);-webkit-text-stroke:0.1px currentColor;">7.+5V</div>
<div style="position:absolute;left:474.50px;top:332.14px;line-height:6.11px;font-size:4.7px;color:#111;font-weight:normal;white-space:nowrap;transform:scaleY(1.15);-webkit-text-stroke:0.1px currentColor;">8.DAC/ADC</div>
<div style="position:absolute;left:474.50px;top:341.14px;line-height:6.11px;font-size:4.7px;color:#111;font-weight:normal;white-space:nowrap;transform:scaleY(1.15);-webkit-text-stroke:0.1px currentColor;">9.DIR+/CLK+</div>
<div style="position:absolute;left:474.50px;top:350.25px;line-height:6.11px;font-size:4.7px;color:#111;font-weight:normal;white-space:nowrap;transform:scaleY(1.15);-webkit-text-stroke:0.1px currentColor;">10.GND</div>
<div style="position:absolute;left:518.30px;top:313.84px;line-height:6.11px;font-size:4.7px;color:#111;font-weight:normal;white-space:nowrap;transform:scaleY(1.15);-webkit-text-stroke:0.1px currentColor;">11.Pulse</div>
<div style="position:absolute;left:518.30px;top:323.04px;line-height:6.11px;font-size:4.7px;color:#111;font-weight:normal;white-space:nowrap;transform:scaleY(1.15);-webkit-text-stroke:0.1px currentColor;">12.----</div>
<div style="position:absolute;left:518.30px;top:332.14px;line-height:6.11px;font-size:4.7px;color:#111;font-weight:normal;white-space:nowrap;transform:scaleY(1.15);-webkit-text-stroke:0.1px currentColor;">13.GND</div>
<div style="position:absolute;left:518.30px;top:341.14px;line-height:6.11px;font-size:4.7px;color:#111;font-weight:normal;white-space:nowrap;transform:scaleY(1.15);-webkit-text-stroke:0.1px currentColor;">14.OVCC</div>
<div style="position:absolute;left:518.30px;top:350.25px;line-height:6.11px;font-size:4.7px;color:#111;font-weight:normal;white-space:nowrap;transform:scaleY(1.15);-webkit-text-stroke:0.1px currentColor;">15.Clear</div>
<div style="position:absolute;left:552.70px;top:313.84px;line-height:6.11px;font-size:4.7px;color:#111;font-weight:normal;white-space:nowrap;transform:scaleY(1.15);-webkit-text-stroke:0.1px currentColor;">16.Arrive</div>
<div style="position:absolute;left:552.70px;top:323.04px;line-height:6.11px;font-size:4.7px;color:#111;font-weight:normal;white-space:nowrap;transform:scaleY(1.15);-webkit-text-stroke:0.1px currentColor;">17.A+</div>
<div style="position:absolute;left:552.70px;top:332.14px;line-height:6.11px;font-size:4.7px;color:#111;font-weight:normal;white-space:nowrap;transform:scaleY(1.15);-webkit-text-stroke:0.1px currentColor;">18.B+</div>
<div style="position:absolute;left:552.70px;top:341.14px;line-height:6.11px;font-size:4.7px;color:#111;font-weight:normal;white-space:nowrap;transform:scaleY(1.15);-webkit-text-stroke:0.1px currentColor;">19.C+/Data+</div>
<div style="position:absolute;left:552.70px;top:350.25px;line-height:6.11px;font-size:4.7px;color:#111;font-weight:normal;white-space:nowrap;transform:scaleY(1.15);-webkit-text-stroke:0.1px currentColor;">20.GND</div>
<div style="position:absolute;left:591.00px;top:313.84px;line-height:6.11px;font-size:4.7px;color:#111;font-weight:normal;white-space:nowrap;transform:scaleY(1.15);-webkit-text-stroke:0.1px currentColor;">21.GND</div>
<div style="position:absolute;left:591.00px;top:323.04px;line-height:6.11px;font-size:4.7px;color:#111;font-weight:normal;white-space:nowrap;transform:scaleY(1.15);-webkit-text-stroke:0.1px currentColor;">22.DIR+/CLK+</div>
<div style="position:absolute;left:591.00px;top:332.14px;line-height:6.11px;font-size:4.7px;color:#111;font-weight:normal;white-space:nowrap;transform:scaleY(1.15);-webkit-text-stroke:0.1px currentColor;">23.Pulse +</div>
<div style="position:absolute;left:591.00px;top:341.14px;line-height:6.11px;font-size:4.7px;color:#111;font-weight:normal;white-space:nowrap;transform:scaleY(1.15);-webkit-text-stroke:0.1px currentColor;">24.GND</div>
<div style="position:absolute;left:591.00px;top:350.25px;line-height:6.11px;font-size:4.7px;color:#111;font-weight:normal;white-space:nowrap;transform:scaleY(1.15);-webkit-text-stroke:0.1px currentColor;">25.----</div>
<div style="position:absolute;left:488.60px;top:287.23px;line-height:5.33px;font-size:4.1px;color:#555;font-weight:normal;white-space:nowrap;transform:scaleY(1.15);-webkit-text-stroke:0;transform:scaleY(1.4);">13</div>
<div style="position:absolute;left:488.60px;top:301.23px;line-height:5.33px;font-size:4.1px;color:#555;font-weight:normal;white-space:nowrap;transform:scaleY(1.15);-webkit-text-stroke:0;transform:scaleY(1.4);">25</div>
<div style="position:absolute;left:563.60px;top:287.23px;line-height:5.33px;font-size:4.1px;color:#555;font-weight:normal;white-space:nowrap;transform:scaleY(1.15);-webkit-text-stroke:0;transform:scaleY(1.4);">1</div>
<div style="position:absolute;left:563.60px;top:301.23px;line-height:5.33px;font-size:4.1px;color:#555;font-weight:normal;white-space:nowrap;transform:scaleY(1.15);-webkit-text-stroke:0;transform:scaleY(1.4);">14</div>
<svg style="position:absolute;left:0px;top:0px;overflow:visible" width="750" height="650" viewBox="0 0 750 650">
<ellipse cx="140.1" cy="231.2" rx="3.5" ry="3.7" fill="none" stroke="#fff" stroke-width="1.35" stroke-dasharray="19.5 3.2" transform="rotate(118 140.1 231.2)"/><path d="M141.5 228.39999999999998L138.6 231.7H140.9L138.29999999999998 236.2" stroke="#fff" stroke-width="1.25" fill="none" stroke-linejoin="round"/>
<path d="M679.5 233.6H684.5" stroke="#fff" stroke-width="0.95"/><rect x="690.3" y="231.7" width="4.5" height="4.4" fill="none" stroke="#fff" stroke-width="0.85"/><path d="M691.5 230.7H695.9V234.9" stroke="#fff" stroke-width="0.7" fill="none"/><path d="M702.7 231.2L707.3 236.0M707.3 231.2L702.7 236.0" stroke="#fff" stroke-width="0.95"/>
<path d="M138.5 247.0L143.7 252.2M143.1 246.79999999999998L138.5 251.39999999999998" stroke="#2a2a2a" stroke-width="0.8" fill="none"/><circle cx="138.1" cy="246.6" r="0.9" fill="none" stroke="#2a2a2a" stroke-width="0.6"/><circle cx="138.1" cy="251.79999999999998" r="0.9" fill="none" stroke="#2a2a2a" stroke-width="0.6"/><circle cx="143.39999999999998" cy="246.5" r="0.9" fill="none" stroke="#2a2a2a" stroke-width="0.6"/><path d="M177.0 245.79999999999998H182.2L179.6 249.2L182.2 252.6H177.0L179.6 249.2Z" stroke="#2a2a2a" stroke-width="0.8" fill="none"/><circle cx="206.0" cy="249.2" r="3.3" fill="none" stroke="#2a2a2a" stroke-width="0.8" stroke-dasharray="18.5 2.2"/><path d="M206.0 247.39999999999998V249.5H207.6" stroke="#2a2a2a" stroke-width="0.6" fill="none"/><path d="M236.6 250.2q0 2.5 2.5 2.5M240.6 245.7v5" stroke="#2a2a2a" stroke-width="0.8" fill="none"/><circle cx="242.2" cy="251.79999999999998" r="0.8" fill="#2a2a2a"/><circle cx="237.0" cy="248.6" r="0.7" fill="#2a2a2a"/><circle cx="278.0" cy="249.2" r="3.3" fill="none" stroke="#2a2a2a" stroke-width="0.8"/><circle cx="278.0" cy="249.2" r="3.9" fill="none" stroke="#2a2a2a" stroke-width="0.9" stroke-dasharray="1.4 1.66"/><circle cx="278.0" cy="249.2" r="1.5" fill="none" stroke="#2a2a2a" stroke-width="0.6"/><rect x="318.8" y="245.2" width="6.4" height="8.0" rx="0.6" fill="none" stroke="#2a2a2a" stroke-width="0.8"/><path d="M319.8 249.79999999999998H321.0L321.8 247.2L322.6 251.2L323.2 249.39999999999998H324.2" stroke="#2a2a2a" stroke-width="0.55" fill="none"/><path d="M351.6 252.79999999999998H358.4M352.0 251.39999999999998V249.79999999999998H358.0V251.39999999999998ZM355.0 245.6V249.6M353.8 246.79999999999998L355.0 245.39999999999998L356.2 246.79999999999998" stroke="#2a2a2a" stroke-width="0.8" fill="none"/><rect x="390.3" y="245.79999999999998" width="6.6" height="6.8" fill="none" stroke="#2a2a2a" stroke-width="0.8"/><path d="M390.3 248.0H396.90000000000003M390.3 250.29999999999998H396.90000000000003M392.6 248.0V252.6M394.8 248.0V252.6" stroke="#2a2a2a" stroke-width="0.5" fill="none"/>
<path d="M319.5 261.90000000000003L322.9 265.3M322.9 261.90000000000003L319.5 265.3" stroke="#8a9296" stroke-width="0.5"/>
<path d="M511.3 261.90000000000003L514.7 265.3M514.7 261.90000000000003L511.3 265.3" stroke="#8a9296" stroke-width="0.5"/>
<path d="M504.3 292.3H498.8A4.0 4.0 0 0 0 498.8 300.4H504.3" fill="#f6f8f8" stroke="#8b9595" stroke-width="1.1"/>
<ellipse cx="498.8" cy="296.4" rx="1.5" ry="1.7" fill="#fff" stroke="#8b9595" stroke-width="0.7"/>
<path d="M552.4 292.3H557.9A4.0 4.0 0 0 1 557.9 300.4H552.4" fill="#f6f8f8" stroke="#8b9595" stroke-width="1.1"/>
<ellipse cx="557.9" cy="296.4" rx="1.5" ry="1.7" fill="#fff" stroke="#8b9595" stroke-width="0.7"/>
<path d="M505 288.4H551.8Q554.6 288.4 554.2 290.8L552.4 302.4Q552 304.8 549.4 304.8H507.4Q504.8 304.8 504.4 302.4L502.6 290.8Q502.2 288.4 505 288.4Z" fill="#f5f7f7" stroke="#8b9595" stroke-width="1.5"/>
<path d="M506.2 290.3H550.6Q552.3 290.3 552.1 291.8L550.8 301.4Q550.6 302.9 549 302.9H507.8Q506.2 302.9 506 301.4L504.7 291.8Q504.5 290.3 506.2 290.3Z" fill="none" stroke="#c9d0d0" stroke-width="0.5"/>
<rect x="506.00" y="293.7" width="1.2" height="1.4" fill="#3a3a3a"/><rect x="509.62" y="293.7" width="1.2" height="1.4" fill="#3a3a3a"/><rect x="513.24" y="293.7" width="1.2" height="1.4" fill="#3a3a3a"/><rect x="516.86" y="293.7" width="1.2" height="1.4" fill="#3a3a3a"/><rect x="520.48" y="293.7" width="1.2" height="1.4" fill="#3a3a3a"/><rect x="524.10" y="293.7" width="1.2" height="1.4" fill="#3a3a3a"/><rect x="527.72" y="293.7" width="1.2" height="1.4" fill="#3a3a3a"/><rect x="531.34" y="293.7" width="1.2" height="1.4" fill="#3a3a3a"/><rect x="534.96" y="293.7" width="1.2" height="1.4" fill="#3a3a3a"/><rect x="538.58" y="293.7" width="1.2" height="1.4" fill="#3a3a3a"/><rect x="542.20" y="293.7" width="1.2" height="1.4" fill="#3a3a3a"/><rect x="545.82" y="293.7" width="1.2" height="1.4" fill="#3a3a3a"/><rect x="549.44" y="293.7" width="1.2" height="1.4" fill="#3a3a3a"/><rect x="507.90" y="298.1" width="1.2" height="1.4" fill="#3a3a3a"/><rect x="511.52" y="298.1" width="1.2" height="1.4" fill="#3a3a3a"/><rect x="515.14" y="298.1" width="1.2" height="1.4" fill="#3a3a3a"/><rect x="518.76" y="298.1" width="1.2" height="1.4" fill="#3a3a3a"/><rect x="522.38" y="298.1" width="1.2" height="1.4" fill="#3a3a3a"/><rect x="526.00" y="298.1" width="1.2" height="1.4" fill="#3a3a3a"/><rect x="529.62" y="298.1" width="1.2" height="1.4" fill="#3a3a3a"/><rect x="533.24" y="298.1" width="1.2" height="1.4" fill="#3a3a3a"/><rect x="536.86" y="298.1" width="1.2" height="1.4" fill="#3a3a3a"/><rect x="540.48" y="298.1" width="1.2" height="1.4" fill="#3a3a3a"/><rect x="544.10" y="298.1" width="1.2" height="1.4" fill="#3a3a3a"/><rect x="547.72" y="298.1" width="1.2" height="1.4" fill="#3a3a3a"/>
<path d="M145.7 335.0V321Q145.7 316.5 150.2 316.5H159.7Q164.2 316.5 164.2 321V335.0" fill="none" stroke="#262626" stroke-width="1.0" stroke-linejoin="round"/>
<path d="M147.0 335.0V321.6Q147.0 317.8 150.8 317.8H159.1Q162.9 317.8 162.9 321.6V335.0" fill="none" stroke="#262626" stroke-width="0.5" stroke-linejoin="round"/>
<rect x="149.4" y="320.2" width="12.4" height="11.0" rx="4.2" fill="none" stroke="#262626" stroke-width="0.9"/>
<path d="M332.1 335.0V321Q332.1 316.5 336.6 316.5H346.6Q351.1 316.5 351.1 321V335.0" fill="none" stroke="#262626" stroke-width="1.0" stroke-linejoin="round"/>
<path d="M333.4 335.0V321.6Q333.4 317.8 337.2 317.8H346.0Q349.8 317.8 349.8 321.6V335.0" fill="none" stroke="#262626" stroke-width="0.5" stroke-linejoin="round"/>
<ellipse cx="342" cy="325.7" rx="3.4" ry="3.9" fill="none" stroke="#262626" stroke-width="0.9"/>
<path d="M164.2 553V567.0Q164.2 572 159.2 572H150.7Q145.7 572 145.7 567.0V553" fill="none" stroke="#262626" stroke-width="1.0" stroke-linejoin="round"/>
<path d="M162.9 553V566.6Q162.9 570.6 158.9 570.6H151.0Q147.0 570.6 147.0 566.6V553" fill="none" stroke="#262626" stroke-width="0.5" stroke-linejoin="round"/>
<rect x="149.0" y="558.0" width="11.8" height="9.4" rx="4" fill="none" stroke="#262626" stroke-width="0.9"/>
<path d="M333.1 553V567.0Q333.1 572 338.1 572H346.1Q351.1 572 351.1 567.0V553" fill="none" stroke="#262626" stroke-width="1.0" stroke-linejoin="round"/>
<path d="M334.4 553V566.6Q334.4 570.6 338.4 570.6H345.8Q349.8 570.6 349.8 566.6V553" fill="none" stroke="#262626" stroke-width="0.5" stroke-linejoin="round"/>
<ellipse cx="341.8" cy="562.4" rx="3.4" ry="3.8" fill="none" stroke="#262626" stroke-width="0.9"/>
<rect x="145.7" y="335.0" width="205.40000000000003" height="218.0" fill="none" stroke="#262626" stroke-width="1.2"/>
<path d="M145.7 367.2H351.1M145.7 522.0H351.1" fill="none" stroke="#262626" stroke-width="1.1" stroke-linejoin="round"/>
<path d="M201.4 335.0V367.2M339.2 335.0V367.2M201.4 522V553.0M339.4 522V553.0" fill="none" stroke="#262626" stroke-width="1.05" stroke-linejoin="round"/>
<path d="M202.8 335.0V367.2M202.8 522V553.0" fill="none" stroke="#262626" stroke-width="0.4" stroke-linejoin="round"/>
<rect x="206.0" y="340.5" width="128.6" height="21.2" rx="2" fill="none" stroke="#262626" stroke-width="1.25"/>
<rect x="206.7" y="527.4" width="127.5" height="20.6" rx="2" fill="none" stroke="#262626" stroke-width="1.25"/>
<path d="M162.5 340.3H184.5Q186.3 340.3 187.3 341.8L190.3 346.3A5.2 5.2 0 1 1 190.3 355.90000000000003L187.3 360.40000000000003Q186.3 361.90000000000003 184.5 361.90000000000003H162.5Q160.7 361.90000000000003 159.7 360.40000000000003L156.7 355.90000000000003A5.2 5.2 0 1 1 156.7 346.3L159.7 341.8Q160.7 340.3 162.5 340.3Z" fill="none" stroke="#262626" stroke-width="1.05" stroke-linejoin="round"/>
<path d="M162.9 341.40000000000003H184.1Q185.5 341.40000000000003 186.4 342.5L189.1 346.70000000000005M189.1 355.5L186.4 359.70000000000005Q185.5 360.8 184.1 360.8H162.9Q161.5 360.8 160.6 359.70000000000005L157.9 355.5M157.9 346.70000000000005L160.6 342.5Q161.5 341.40000000000003 162.9 341.40000000000003" fill="none" stroke="#262626" stroke-width="0.35" stroke-linejoin="round"/>
<path d="M162.9 343.40000000000003H184.1Q186.1 343.40000000000003 185.8 345.40000000000003L185.1 356.5Q184.9 358.3 183.1 358.3H163.9Q162.1 358.3 161.9 356.5L161.2 345.40000000000003Q160.9 343.40000000000003 162.9 343.40000000000003Z" fill="none" stroke="#262626" stroke-width="1.1" stroke-linejoin="round"/>
<circle cx="154.7" cy="351.1" r="3.1" fill="none" stroke="#262626" stroke-width="1.0"/><circle cx="154.7" cy="351.1" r="4.2" fill="none" stroke="#262626" stroke-width="0.3"/>
<circle cx="192.3" cy="351.1" r="3.1" fill="none" stroke="#262626" stroke-width="1.0"/><circle cx="192.3" cy="351.1" r="4.2" fill="none" stroke="#262626" stroke-width="0.3"/>
<path d="M162.5 527.1H184.5Q186.3 527.1 187.3 528.6L190.3 533.1A5.2 5.2 0 1 1 190.3 542.6999999999999L187.3 547.1999999999999Q186.3 548.6999999999999 184.5 548.6999999999999H162.5Q160.7 548.6999999999999 159.7 547.1999999999999L156.7 542.6999999999999A5.2 5.2 0 1 1 156.7 533.1L159.7 528.6Q160.7 527.1 162.5 527.1Z" fill="none" stroke="#262626" stroke-width="1.05" stroke-linejoin="round"/>
<path d="M162.9 528.1999999999999H184.1Q185.5 528.1999999999999 186.4 529.3L189.1 533.5M189.1 542.3L186.4 546.5Q185.5 547.6 184.1 547.6H162.9Q161.5 547.6 160.6 546.5L157.9 542.3M157.9 533.5L160.6 529.3Q161.5 528.1999999999999 162.9 528.1999999999999" fill="none" stroke="#262626" stroke-width="0.35" stroke-linejoin="round"/>
<path d="M162.9 530.1999999999999H184.1Q186.1 530.1999999999999 185.8 532.1999999999999L185.1 543.3Q184.9 545.1 183.1 545.1H163.9Q162.1 545.1 161.9 543.3L161.2 532.1999999999999Q160.9 530.1999999999999 162.9 530.1999999999999Z" fill="none" stroke="#262626" stroke-width="1.1" stroke-linejoin="round"/>
<circle cx="154.7" cy="537.9" r="3.1" fill="none" stroke="#262626" stroke-width="1.0"/><circle cx="154.7" cy="537.9" r="4.2" fill="none" stroke="#262626" stroke-width="0.3"/>
<circle cx="192.3" cy="537.9" r="3.1" fill="none" stroke="#262626" stroke-width="1.0"/><circle cx="192.3" cy="537.9" r="4.2" fill="none" stroke="#262626" stroke-width="0.3"/>
<rect x="158.65" y="411.4" width="24.9" height="92.30000000000001" rx="3" fill="none" stroke="#262626" stroke-width="0.95"/>
<path d="M167.7 426.26A5.3 5.3 0 1 1 174.5 426.26L178.99999999999997 429.2Q179.79999999999998 429.8 179.79999999999998 431.4V483.40000000000003Q179.79999999999998 485.0 178.99999999999997 485.6L174.5 488.54A5.3 5.3 0 1 1 167.7 488.54L163.20000000000002 485.6Q162.4 485.0 162.4 483.40000000000003V431.4Q162.4 429.8 163.20000000000002 429.2Z" fill="none" stroke="#262626" stroke-width="1.0" stroke-linejoin="round"/>
<path d="M168.2 425.4A4.3 4.3 0 1 1 174.0 425.4L178.2 429.8Q178.79999999999998 430.3 178.79999999999998 431.59999999999997V483.20000000000005Q178.79999999999998 484.5 178.2 485.0L174.0 489.40000000000003A4.3 4.3 0 1 1 168.2 489.40000000000003L164.0 485.0Q163.4 484.5 163.4 483.20000000000005V431.59999999999997Q163.4 430.3 164.0 429.8Z" fill="none" stroke="#262626" stroke-width="0.3" stroke-linejoin="round"/>
<circle cx="171.1" cy="422.2" r="3.0" fill="none" stroke="#262626" stroke-width="1.0"/>
<circle cx="171.1" cy="492.6" r="3.0" fill="none" stroke="#262626" stroke-width="1.0"/>
<path d="M166.70000000000002 429.3L175.7 431.0Q177.29999999999998 431.3 177.29999999999998 433.1V482.8Q177.29999999999998 484.6 175.7 484.90000000000003L166.70000000000002 486.6Q164.9 486.6 164.9 484.8V431.1Q164.9 429.3 166.70000000000002 429.3Z" fill="none" stroke="#262626" stroke-width="1.05" stroke-linejoin="round"/>
<text transform="translate(171.30 405.40) scale(1 1.15)" x="0" y="1.62" font-size="4.5" text-anchor="middle" fill="#111" font-weight="bold" font-style="italic">AXIS1</text>
<rect x="185.05" y="411.4" width="24.9" height="92.30000000000001" rx="3" fill="none" stroke="#262626" stroke-width="0.95"/>
<path d="M194.1 426.26A5.3 5.3 0 1 1 200.9 426.26L205.39999999999998 429.2Q206.2 429.8 206.2 431.4V483.40000000000003Q206.2 485.0 205.39999999999998 485.6L200.9 488.54A5.3 5.3 0 1 1 194.1 488.54L189.60000000000002 485.6Q188.8 485.0 188.8 483.40000000000003V431.4Q188.8 429.8 189.60000000000002 429.2Z" fill="none" stroke="#262626" stroke-width="1.0" stroke-linejoin="round"/>
<path d="M194.6 425.4A4.3 4.3 0 1 1 200.4 425.4L204.6 429.8Q205.2 430.3 205.2 431.59999999999997V483.20000000000005Q205.2 484.5 204.6 485.0L200.4 489.40000000000003A4.3 4.3 0 1 1 194.6 489.40000000000003L190.4 485.0Q189.8 484.5 189.8 483.20000000000005V431.59999999999997Q189.8 430.3 190.4 429.8Z" fill="none" stroke="#262626" stroke-width="0.3" stroke-linejoin="round"/>
<circle cx="197.5" cy="422.2" r="3.0" fill="none" stroke="#262626" stroke-width="1.0"/>
<circle cx="197.5" cy="492.6" r="3.0" fill="none" stroke="#262626" stroke-width="1.0"/>
<path d="M193.10000000000002 429.3L202.1 431.0Q203.7 431.3 203.7 433.1V482.8Q203.7 484.6 202.1 484.90000000000003L193.10000000000002 486.6Q191.3 486.6 191.3 484.8V431.1Q191.3 429.3 193.10000000000002 429.3Z" fill="none" stroke="#262626" stroke-width="1.05" stroke-linejoin="round"/>
<text transform="translate(197.70 405.40) scale(1 1.15)" x="0" y="1.62" font-size="4.5" text-anchor="middle" fill="#111" font-weight="bold" font-style="italic">AXIS2</text>
<rect x="211.45" y="411.4" width="24.9" height="92.30000000000001" rx="3" fill="none" stroke="#262626" stroke-width="0.95"/>
<path d="M220.49999999999997 426.26A5.3 5.3 0 1 1 227.29999999999998 426.26L231.79999999999995 429.2Q232.59999999999997 429.8 232.59999999999997 431.4V483.40000000000003Q232.59999999999997 485.0 231.79999999999995 485.6L227.29999999999998 488.54A5.3 5.3 0 1 1 220.49999999999997 488.54L216.0 485.6Q215.2 485.0 215.2 483.40000000000003V431.4Q215.2 429.8 216.0 429.2Z" fill="none" stroke="#262626" stroke-width="1.0" stroke-linejoin="round"/>
<path d="M220.99999999999997 425.4A4.3 4.3 0 1 1 226.79999999999998 425.4L230.99999999999997 429.8Q231.59999999999997 430.3 231.59999999999997 431.59999999999997V483.20000000000005Q231.59999999999997 484.5 230.99999999999997 485.0L226.79999999999998 489.40000000000003A4.3 4.3 0 1 1 220.99999999999997 489.40000000000003L216.79999999999998 485.0Q216.2 484.5 216.2 483.20000000000005V431.59999999999997Q216.2 430.3 216.79999999999998 429.8Z" fill="none" stroke="#262626" stroke-width="0.3" stroke-linejoin="round"/>
<circle cx="223.89999999999998" cy="422.2" r="3.0" fill="none" stroke="#262626" stroke-width="1.0"/>
<circle cx="223.89999999999998" cy="492.6" r="3.0" fill="none" stroke="#262626" stroke-width="1.0"/>
<path d="M219.5 429.3L228.49999999999997 431.0Q230.09999999999997 431.3 230.09999999999997 433.1V482.8Q230.09999999999997 484.6 228.49999999999997 484.90000000000003L219.5 486.6Q217.7 486.6 217.7 484.8V431.1Q217.7 429.3 219.5 429.3Z" fill="none" stroke="#262626" stroke-width="1.05" stroke-linejoin="round"/>
<text transform="translate(224.10 405.40) scale(1 1.15)" x="0" y="1.62" font-size="4.5" text-anchor="middle" fill="#111" font-weight="bold" font-style="italic">AXIS3</text>
<rect x="237.85" y="411.4" width="24.9" height="92.30000000000001" rx="3" fill="none" stroke="#262626" stroke-width="0.95"/>
<path d="M246.89999999999998 426.26A5.3 5.3 0 1 1 253.7 426.26L258.2 429.2Q259.0 429.8 259.0 431.4V483.40000000000003Q259.0 485.0 258.2 485.6L253.7 488.54A5.3 5.3 0 1 1 246.89999999999998 488.54L242.4 485.6Q241.6 485.0 241.6 483.40000000000003V431.4Q241.6 429.8 242.4 429.2Z" fill="none" stroke="#262626" stroke-width="1.0" stroke-linejoin="round"/>
<path d="M247.39999999999998 425.4A4.3 4.3 0 1 1 253.2 425.4L257.4 429.8Q258.0 430.3 258.0 431.59999999999997V483.20000000000005Q258.0 484.5 257.4 485.0L253.2 489.40000000000003A4.3 4.3 0 1 1 247.39999999999998 489.40000000000003L243.2 485.0Q242.6 484.5 242.6 483.20000000000005V431.59999999999997Q242.6 430.3 243.2 429.8Z" fill="none" stroke="#262626" stroke-width="0.3" stroke-linejoin="round"/>
<circle cx="250.29999999999998" cy="422.2" r="3.0" fill="none" stroke="#262626" stroke-width="1.0"/>
<circle cx="250.29999999999998" cy="492.6" r="3.0" fill="none" stroke="#262626" stroke-width="1.0"/>
<path d="M245.9 429.3L254.9 431.0Q256.5 431.3 256.5 433.1V482.8Q256.5 484.6 254.9 484.90000000000003L245.9 486.6Q244.1 486.6 244.1 484.8V431.1Q244.1 429.3 245.9 429.3Z" fill="none" stroke="#262626" stroke-width="1.05" stroke-linejoin="round"/>
<text transform="translate(250.50 405.40) scale(1 1.15)" x="0" y="1.62" font-size="4.5" text-anchor="middle" fill="#111" font-weight="bold" font-style="italic">AXIS4</text>
<rect x="264.25" y="411.4" width="24.9" height="92.30000000000001" rx="3" fill="none" stroke="#262626" stroke-width="0.95"/>
<path d="M273.3 426.26A5.3 5.3 0 1 1 280.09999999999997 426.26L284.59999999999997 429.2Q285.4 429.8 285.4 431.4V483.40000000000003Q285.4 485.0 284.59999999999997 485.6L280.09999999999997 488.54A5.3 5.3 0 1 1 273.3 488.54L268.8 485.6Q268.0 485.0 268.0 483.40000000000003V431.4Q268.0 429.8 268.8 429.2Z" fill="none" stroke="#262626" stroke-width="1.0" stroke-linejoin="round"/>
<path d="M273.8 425.4A4.3 4.3 0 1 1 279.59999999999997 425.4L283.79999999999995 429.8Q284.4 430.3 284.4 431.59999999999997V483.20000000000005Q284.4 484.5 283.79999999999995 485.0L279.59999999999997 489.40000000000003A4.3 4.3 0 1 1 273.8 489.40000000000003L269.6 485.0Q269.0 484.5 269.0 483.20000000000005V431.59999999999997Q269.0 430.3 269.6 429.8Z" fill="none" stroke="#262626" stroke-width="0.3" stroke-linejoin="round"/>
<circle cx="276.7" cy="422.2" r="3.0" fill="none" stroke="#262626" stroke-width="1.0"/>
<circle cx="276.7" cy="492.6" r="3.0" fill="none" stroke="#262626" stroke-width="1.0"/>
<path d="M272.3 429.3L281.29999999999995 431.0Q282.9 431.3 282.9 433.1V482.8Q282.9 484.6 281.29999999999995 484.90000000000003L272.3 486.6Q270.5 486.6 270.5 484.8V431.1Q270.5 429.3 272.3 429.3Z" fill="none" stroke="#262626" stroke-width="1.05" stroke-linejoin="round"/>
<text transform="translate(276.90 405.40) scale(1 1.15)" x="0" y="1.62" font-size="4.5" text-anchor="middle" fill="#111" font-weight="bold" font-style="italic">AXIS5</text>
<rect x="290.65000000000003" y="411.4" width="24.9" height="92.30000000000001" rx="3" fill="none" stroke="#262626" stroke-width="0.95"/>
<path d="M299.70000000000005 426.26A5.3 5.3 0 1 1 306.5 426.26L311.0 429.2Q311.8 429.8 311.8 431.4V483.40000000000003Q311.8 485.0 311.0 485.6L306.5 488.54A5.3 5.3 0 1 1 299.70000000000005 488.54L295.20000000000005 485.6Q294.40000000000003 485.0 294.40000000000003 483.40000000000003V431.4Q294.40000000000003 429.8 295.20000000000005 429.2Z" fill="none" stroke="#262626" stroke-width="1.0" stroke-linejoin="round"/>
<path d="M300.20000000000005 425.4A4.3 4.3 0 1 1 306.0 425.4L310.2 429.8Q310.8 430.3 310.8 431.59999999999997V483.20000000000005Q310.8 484.5 310.2 485.0L306.0 489.40000000000003A4.3 4.3 0 1 1 300.20000000000005 489.40000000000003L296.00000000000006 485.0Q295.40000000000003 484.5 295.40000000000003 483.20000000000005V431.59999999999997Q295.40000000000003 430.3 296.00000000000006 429.8Z" fill="none" stroke="#262626" stroke-width="0.3" stroke-linejoin="round"/>
<circle cx="303.1" cy="422.2" r="3.0" fill="none" stroke="#262626" stroke-width="1.0"/>
<circle cx="303.1" cy="492.6" r="3.0" fill="none" stroke="#262626" stroke-width="1.0"/>
<path d="M298.70000000000005 429.3L307.7 431.0Q309.3 431.3 309.3 433.1V482.8Q309.3 484.6 307.7 484.90000000000003L298.70000000000005 486.6Q296.90000000000003 486.6 296.90000000000003 484.8V431.1Q296.90000000000003 429.3 298.70000000000005 429.3Z" fill="none" stroke="#262626" stroke-width="1.05" stroke-linejoin="round"/>
<text transform="translate(303.30 405.40) scale(1 1.15)" x="0" y="1.62" font-size="4.5" text-anchor="middle" fill="#111" font-weight="bold" font-style="italic">AXIS6</text>
<rect x="317.3" y="384.2" width="24.4" height="58.10000000000002" rx="3" fill="none" stroke="#262626" stroke-width="0.95"/>
<path d="M326.1 396.66A5.3 5.3 0 1 1 332.9 396.66L337.5 399.6Q338.3 400.20000000000005 338.3 401.8V423.5Q338.3 425.09999999999997 337.5 425.7L332.9 428.64A5.3 5.3 0 1 1 326.1 428.64L321.5 425.7Q320.7 425.09999999999997 320.7 423.5V401.8Q320.7 400.20000000000005 321.5 399.6Z" fill="none" stroke="#262626" stroke-width="1.0" stroke-linejoin="round"/>
<path d="M326.6 395.8A4.3 4.3 0 1 1 332.4 395.8L336.7 400.20000000000005Q337.3 400.70000000000005 337.3 402.0V423.3Q337.3 424.59999999999997 336.7 425.09999999999997L332.4 429.5A4.3 4.3 0 1 1 326.6 429.5L322.3 425.09999999999997Q321.7 424.59999999999997 321.7 423.3V402.0Q321.7 400.70000000000005 322.3 400.20000000000005Z" fill="none" stroke="#262626" stroke-width="0.3" stroke-linejoin="round"/>
<circle cx="329.5" cy="392.6" r="3.0" fill="none" stroke="#262626" stroke-width="1.0"/>
<circle cx="329.5" cy="432.7" r="3.0" fill="none" stroke="#262626" stroke-width="1.0"/>
<path d="M325.2 398.8L334.0 400.5Q335.6 400.8 335.6 402.6V422.4Q335.6 424.2 334.0 424.5L325.2 426.2Q323.4 426.2 323.4 424.4V400.6Q323.4 398.8 325.2 398.8Z" fill="none" stroke="#262626" stroke-width="1.05" stroke-linejoin="round"/>
<rect x="317.5" y="446.6" width="24.0" height="56.0" rx="3" fill="none" stroke="#262626" stroke-width="0.95"/>
<path d="M326.1 458.06A5.3 5.3 0 1 1 332.9 458.06L337.5 461.0Q338.3 461.6 338.3 463.2V485.7Q338.3 487.29999999999995 337.5 487.9L332.9 490.84A5.3 5.3 0 1 1 326.1 490.84L321.5 487.9Q320.7 487.29999999999995 320.7 485.7V463.2Q320.7 461.6 321.5 461.0Z" fill="none" stroke="#262626" stroke-width="1.0" stroke-linejoin="round"/>
<path d="M326.6 457.2A4.3 4.3 0 1 1 332.4 457.2L336.7 461.6Q337.3 462.1 337.3 463.4V485.5Q337.3 486.79999999999995 336.7 487.29999999999995L332.4 491.7A4.3 4.3 0 1 1 326.6 491.7L322.3 487.29999999999995Q321.7 486.79999999999995 321.7 485.5V463.4Q321.7 462.1 322.3 461.6Z" fill="none" stroke="#262626" stroke-width="0.3" stroke-linejoin="round"/>
<circle cx="329.5" cy="454.0" r="3.0" fill="none" stroke="#262626" stroke-width="1.0"/>
<circle cx="329.5" cy="494.9" r="3.0" fill="none" stroke="#262626" stroke-width="1.0"/>
<path d="M325.2 460.6L334.0 462.3Q335.6 462.6 335.6 464.40000000000003V484.0Q335.6 485.8 334.0 486.1L325.2 487.8Q323.4 487.8 323.4 486.0V462.40000000000003Q323.4 460.6 325.2 460.6Z" fill="none" stroke="#262626" stroke-width="1.05" stroke-linejoin="round"/>
<path d="M201.2 367.8H334.9M201.2 373.8H334.9M201.2 367.8V373.8M211.3 367.8V373.8M222 367.8V373.8M232.8 367.8V373.8M245 367.8V373.8M258.2 367.8V373.8M271.1 367.8V373.8M283.4 367.8V373.8M295.6 367.8V373.8M307.9 367.8V373.8M317.7 367.8V373.8M327.9 367.8V373.8M334.9 367.8V373.8" stroke="#7c7c7c" stroke-width="0.45" fill="none"/>
<text transform="translate(206.25 370.80) scale(1 1.15)" x="0" y="1.04" font-size="2.9" text-anchor="middle" fill="#555" >HM0</text>
<text transform="translate(216.65 370.80) scale(1 1.15)" x="0" y="1.04" font-size="2.9" text-anchor="middle" fill="#555" >HM2</text>
<text transform="translate(227.40 370.80) scale(1 1.15)" x="0" y="1.04" font-size="2.9" text-anchor="middle" fill="#555" >HM4</text>
<text transform="translate(238.90 370.80) scale(1 1.15)" x="0" y="1.04" font-size="2.9" text-anchor="middle" fill="#555" >LMT0-</text>
<text transform="translate(251.60 370.80) scale(1 1.15)" x="0" y="1.04" font-size="2.9" text-anchor="middle" fill="#555" >LMT1-</text>
<text transform="translate(264.65 370.80) scale(1 1.15)" x="0" y="1.04" font-size="2.9" text-anchor="middle" fill="#555" >LMT2-</text>
<text transform="translate(277.25 370.80) scale(1 1.15)" x="0" y="1.04" font-size="2.9" text-anchor="middle" fill="#555" >LMT3-</text>
<text transform="translate(289.50 370.80) scale(1 1.15)" x="0" y="1.04" font-size="2.9" text-anchor="middle" fill="#555" >LMT4-</text>
<text transform="translate(301.75 370.80) scale(1 1.15)" x="0" y="1.04" font-size="2.9" text-anchor="middle" fill="#555" >LMT5-</text>
<text transform="translate(312.80 370.80) scale(1 1.15)" x="0" y="1.04" font-size="2.9" text-anchor="middle" fill="#555" >DI14</text>
<text transform="translate(322.80 370.80) scale(1 1.15)" x="0" y="1.04" font-size="2.9" text-anchor="middle" fill="#555" >GND</text>
<text transform="translate(331.40 370.80) scale(1 1.15)" x="0" y="1.04" font-size="2.9" text-anchor="middle" fill="#555" >PE</text>
<path d="M206.7 375.0H341.7M206.7 380.8H341.7M206.7 375.0V380.8M215.9 375.0V380.8M225.7 375.0V380.8M235.8 375.0V380.8M249 375.0V380.8M262.5 375.0V380.8M276.6 375.0V380.8M290.1 375.0V380.8M303.3 375.0V380.8M315.6 375.0V380.8M325.7 375.0V380.8M332.5 375.0V380.8M341.7 375.0V380.8" stroke="#7c7c7c" stroke-width="0.45" fill="none"/>
<text transform="translate(211.30 377.90) scale(1 1.15)" x="0" y="1.04" font-size="2.9" text-anchor="middle" fill="#555" >HM1</text>
<text transform="translate(220.80 377.90) scale(1 1.15)" x="0" y="1.04" font-size="2.9" text-anchor="middle" fill="#555" >HM3</text>
<text transform="translate(230.75 377.90) scale(1 1.15)" x="0" y="1.04" font-size="2.9" text-anchor="middle" fill="#555" >HM5</text>
<text transform="translate(242.40 377.90) scale(1 1.15)" x="0" y="1.04" font-size="2.9" text-anchor="middle" fill="#555" >LMT0+</text>
<text transform="translate(255.75 377.90) scale(1 1.15)" x="0" y="1.04" font-size="2.9" text-anchor="middle" fill="#555" >LMT1+</text>
<text transform="translate(269.55 377.90) scale(1 1.15)" x="0" y="1.04" font-size="2.9" text-anchor="middle" fill="#555" >LMT2+</text>
<text transform="translate(283.35 377.90) scale(1 1.15)" x="0" y="1.04" font-size="2.9" text-anchor="middle" fill="#555" >LMT3+</text>
<text transform="translate(296.70 377.90) scale(1 1.15)" x="0" y="1.04" font-size="2.9" text-anchor="middle" fill="#555" >LMT4+</text>
<text transform="translate(309.45 377.90) scale(1 1.15)" x="0" y="1.04" font-size="2.9" text-anchor="middle" fill="#555" >LMT5+</text>
<text transform="translate(320.65 377.90) scale(1 1.15)" x="0" y="1.04" font-size="2.9" text-anchor="middle" fill="#555" >DI15</text>
<text transform="translate(329.10 377.90) scale(1 1.15)" x="0" y="1.04" font-size="2.9" text-anchor="middle" fill="#555" >5V</text>
<text transform="translate(337.10 377.90) scale(1 1.15)" x="0" y="1.04" font-size="2.9" text-anchor="middle" fill="#555" >24V</text>
<path d="M194.7 515.8H336.0M194.70 510.2V515.8M205.91 510.2V515.8M217.12 510.2V515.8M228.33 510.2V515.8M239.54 510.2V515.8M250.75 510.2V515.8M261.96 510.2V515.8M273.17 510.2V515.8M285.76 510.2V515.8M298.32 510.2V515.8M310.88 510.2V515.8M323.44 510.2V515.8M336.00 510.2V515.8" stroke="#4a4a4a" stroke-width="0.75" fill="none"/>
<text transform="translate(200.61 513.00) scale(1 1.15)" x="0" y="1.04" font-size="2.9" text-anchor="middle" fill="#555" >DI00</text>
<text transform="translate(211.81 513.00) scale(1 1.15)" x="0" y="1.04" font-size="2.9" text-anchor="middle" fill="#555" >DI02</text>
<text transform="translate(223.03 513.00) scale(1 1.15)" x="0" y="1.04" font-size="2.9" text-anchor="middle" fill="#555" >DI04</text>
<text transform="translate(234.24 513.00) scale(1 1.15)" x="0" y="1.04" font-size="2.9" text-anchor="middle" fill="#555" >DI06</text>
<text transform="translate(245.44 513.00) scale(1 1.15)" x="0" y="1.04" font-size="2.9" text-anchor="middle" fill="#555" >DI08</text>
<text transform="translate(256.66 513.00) scale(1 1.15)" x="0" y="1.04" font-size="2.9" text-anchor="middle" fill="#555" >DI10</text>
<text transform="translate(267.86 513.00) scale(1 1.15)" x="0" y="1.04" font-size="2.9" text-anchor="middle" fill="#555" >DI12</text>
<text transform="translate(279.76 513.00) scale(1 1.15)" x="0" y="1.04" font-size="2.9" text-anchor="middle" fill="#555" >DO00</text>
<text transform="translate(292.34 513.00) scale(1 1.15)" x="0" y="1.04" font-size="2.9" text-anchor="middle" fill="#555" >DO02</text>
<text transform="translate(304.90 513.00) scale(1 1.15)" x="0" y="1.04" font-size="2.9" text-anchor="middle" fill="#555" >DO04</text>
<text transform="translate(317.46 513.00) scale(1 1.15)" x="0" y="1.04" font-size="2.9" text-anchor="middle" fill="#555" >DO06</text>
<text transform="translate(330.02 513.00) scale(1 1.15)" x="0" y="1.04" font-size="2.9" text-anchor="middle" fill="#555" >DO08</text>
<path d="M201.70 516.2V521.6M212.66 516.2V521.6M223.62 516.2V521.6M234.58 516.2V521.6M245.54 516.2V521.6M256.50 516.2V521.6M267.46 516.2V521.6M278.42 516.2V521.6M290.58 516.2V521.6M302.76 516.2V521.6M314.94 516.2V521.6M327.12 516.2V521.6M339.30 516.2V521.6" stroke="#8a8a8a" stroke-width="0.5" fill="none"/>
<text transform="translate(207.18 519.00) scale(1 1.15)" x="0" y="1.04" font-size="2.9" text-anchor="middle" fill="#555" >DI01</text>
<text transform="translate(218.14 519.00) scale(1 1.15)" x="0" y="1.04" font-size="2.9" text-anchor="middle" fill="#555" >DI03</text>
<text transform="translate(229.10 519.00) scale(1 1.15)" x="0" y="1.04" font-size="2.9" text-anchor="middle" fill="#555" >DI05</text>
<text transform="translate(240.06 519.00) scale(1 1.15)" x="0" y="1.04" font-size="2.9" text-anchor="middle" fill="#555" >DI07</text>
<text transform="translate(251.02 519.00) scale(1 1.15)" x="0" y="1.04" font-size="2.9" text-anchor="middle" fill="#555" >DI09</text>
<text transform="translate(261.98 519.00) scale(1 1.15)" x="0" y="1.04" font-size="2.9" text-anchor="middle" fill="#555" >DI11</text>
<text transform="translate(272.94 519.00) scale(1 1.15)" x="0" y="1.04" font-size="2.9" text-anchor="middle" fill="#555" >DI13</text>
<text transform="translate(284.50 519.00) scale(1 1.15)" x="0" y="1.04" font-size="2.9" text-anchor="middle" fill="#555" >DO01</text>
<text transform="translate(296.67 519.00) scale(1 1.15)" x="0" y="1.04" font-size="2.9" text-anchor="middle" fill="#555" >DO03</text>
<text transform="translate(308.85 519.00) scale(1 1.15)" x="0" y="1.04" font-size="2.9" text-anchor="middle" fill="#555" >DO05</text>
<text transform="translate(321.03 519.00) scale(1 1.15)" x="0" y="1.04" font-size="2.9" text-anchor="middle" fill="#555" >DO07</text>
<text transform="translate(333.21 519.00) scale(1 1.15)" x="0" y="1.04" font-size="2.9" text-anchor="middle" fill="#555" >DO09</text>
</svg>
</div></body></html>
